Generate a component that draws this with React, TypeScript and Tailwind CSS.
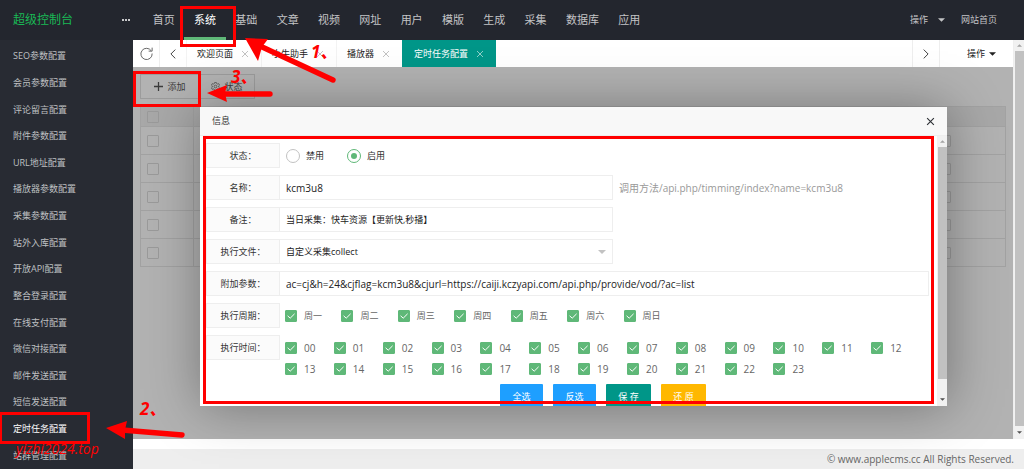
import React from "react";

const topNav = ["首页", "系统", "基础", "文章", "视频", "网址", "用户", "模版", "生成", "采集", "数据库", "应用"];

const sideNav = [
  "SEO参数配置", "会员参数配置", "评论留言配置", "附件参数配置", "URL地址配置", "播放器参数配置",
  "采集参数配置", "站外入库配置", "开放API配置", "整合登录配置", "在线支付配置", "微信对接配置",
  "邮件发送配置", "短信发送配置", "定时任务配置", "站群管理配置",
];

const tabs = ["欢迎页面", "小牛助手", "播放器", "定时任务配置"];
const days = ["周一", "周二", "周三", "周四", "周五", "周六", "周日"];
const hours = Array.from({ length: 24 }, (_, i) => String(i).padStart(2, "0"));

function Caret({ className }: { className: string }) {
  return (
    <svg viewBox="0 0 8 4" className={className} fill="currentColor" aria-hidden="true">
      <path d="M0 0h8L4 4z" />
    </svg>
  );
}

function Cross({ className, width = 1 }: { className: string; width?: number }) {
  return (
    <svg viewBox="0 0 8 8" className={className} fill="none" stroke="currentColor" strokeWidth={width} aria-hidden="true">
      <path d="M1 1l6 6M7 1L1 7" />
    </svg>
  );
}

function Chevron({ className, left = false }: { className: string; left?: boolean }) {
  return (
    <svg viewBox="0 0 6 10" className={className} fill="none" stroke="currentColor" strokeWidth="1" aria-hidden="true">
      <path d={left ? "M5.3.6L.9 5l4.4 4.4" : "M.7.6L5.1 5 .7 9.4"} />
    </svg>
  );
}

function ScrollBar({ thumb }: { thumb: string }) {
  return (
    <div className="flex w-[10px] shrink-0 flex-col items-center bg-[#f1f1f1]" aria-hidden="true">
      <div className="flex h-[11px] items-center text-[#a3a3a3]">
        <Caret className="h-[3px] w-[5px] rotate-180" />
      </div>
      <div className={thumb} />
      <div className="mt-auto flex h-[13px] items-center text-[#505050]">
        <Caret className="h-[3px] w-[5px]" />
      </div>
    </div>
  );
}

function Tick({ label }: { label: string }) {
  return (
    <label className="relative flex h-[21px] items-center gap-[7px] text-[#666]">
      <input type="checkbox" defaultChecked className="peer size-3 appearance-none rounded-[1px] border border-[#d2d2d2] checked:border-[#5fb878] checked:bg-[#5fb878]" />
      <svg viewBox="0 0 12 12" className="pointer-events-none absolute left-0 hidden size-3 peer-checked:block" fill="none" stroke="#fff" strokeWidth="1">
        <path d="M2.6 5.8l2.600 2.400 4.400-4.400" />
      </svg>
      <span>{label}</span>
    </label>
  );
}

function Row({ label, htmlFor, children }: { label: string; htmlFor?: string; children: React.ReactNode }) {
  const box = "flex h-[25px] w-[74px] shrink-0 items-center justify-center border border-[#eee] bg-[#fbfbfb] text-[#333]";
  return (
    <div className="flex items-start">
      {htmlFor ? <label htmlFor={htmlFor} className={box}>{label}</label> : <div className={box}>{label}</div>}
      {children}
    </div>
  );
}

const field = "h-[25px] min-w-0 appearance-none border border-l-0 border-[#eee] bg-white px-1.5 text-[#222] outline-none";

function TaskDialog() {
  return (
    <section role="dialog" aria-label="信息" className="absolute top-10 right-[66px] left-[67px] flex h-[299px] flex-col overflow-hidden bg-white shadow-[1px_1px_50px_rgba(0,0,0,0.35)]">
      <header className="flex h-[29px] shrink-0 items-center justify-between border-b border-[#eee] bg-[#f8f8f8] px-3 text-[#333]">
        <h2>信息</h2>
        <button aria-label="关闭" className="text-[#2d3035]"><Cross className="size-[9px]" width={1} /></button>
      </header>
      <div className="flex min-h-0 flex-1">
        <form className="flex min-w-0 flex-1 flex-col gap-[7px] overflow-hidden pt-[7px] pr-2 pl-1.5">
          <Row label="状态：">
            <div className="flex h-[25px] items-center gap-[23px] pl-1.5 text-[#333]">
              {["禁用", "启用"].map((t, i) => (
                <label key={t} className="flex items-center gap-1.5">
                  <input type="radio" name="status" defaultChecked={i === 1} className="grid size-[14px] appearance-none place-items-center rounded-full border border-[#c2c2c2] checked:border-[#5fb878] checked:before:size-1.5 checked:before:rounded-full checked:before:bg-[#5fb878] checked:before:content-['']" />
                  {t}
                </label>
              ))}
            </div>
          </Row>
          <Row label="名称：" htmlFor="name">
            <input id="name" defaultValue="kcm3u8" className={`${field} w-[333px] text-[10px]`} />
            <span className="flex h-[25px] items-center pl-1.5 text-[10px] text-[#999]">调用方法/api.php/timming/index?name=kcm3u8</span>
          </Row>
          <Row label="备注：" htmlFor="remark">
            <input id="remark" defaultValue="当日采集：快车资源【更新快,秒播】" className={`${field} w-[333px]`} />
          </Row>
          <Row label="执行文件：" htmlFor="file">
            <div className="relative flex w-[333px] items-center">
              <select id="file" className={`${field} w-full`}>
                <option>自定义采集collect</option>
              </select>
              <Caret className="pointer-events-none absolute right-[7px] h-1 w-2 text-[#c2c2c2]" />
            </div>
          </Row>
          <Row label="附加参数：" htmlFor="param">
            <input id="param" defaultValue="ac=cj&h=24&cjflag=kcm3u8&cjurl=https://caiji.kczyapi.com/api.php/provide/vod/?ac=list" className={`${field} flex-1 text-[10px]`} />
          </Row>
          <Row label="执行周期：">
            <div className="grid w-[400px] grid-cols-7 pt-0.5 pl-[5px]">
              {days.map((d) => <Tick key={d} label={d} />)}
            </div>
          </Row>
          <Row label="执行时间：">
            <div className="grid w-[640px] grid-cols-13 pt-0.5 pl-[5px] text-[10px]">
              {hours.map((h) => <Tick key={h} label={h} />)}
            </div>
          </Row>
          <div className="-mt-0.5 flex shrink-0 justify-center gap-2.5 pl-[71px] text-white">
            <button type="button" className="h-[25px] w-[43px] rounded-[1px] bg-[#1e9fff]">全选</button>
            <button type="button" className="h-[25px] w-[43px] rounded-[1px] bg-[#1e9fff]">反选</button>
            <button type="submit" className="h-[25px] w-[45px] rounded-[1px] bg-[#009688]">保 存</button>
            <button type="reset" className="h-[25px] w-[45px] rounded-[1px] bg-[#ffb800]">还 原</button>
          </div>
        </form>
        <ScrollBar thumb="h-[232px] w-[9px] bg-[#c1c1c1]" />
      </div>
    </section>
  );
}

function TaskList() {
  const box = "block size-3 appearance-none rounded-[1px] border border-[#9a9a9a]";
  return (
    <div className="px-[7px] pt-[7px]">
      <div className="flex text-[#3c3c3c]">
        <button className="flex h-[25px] w-[60px] items-center justify-center gap-1 border border-[#9c9c9c]">
          <svg viewBox="0 0 10 10" className="size-[9px]" stroke="currentColor" strokeWidth="1.4"><path d="M5 0v10M0 5h10" /></svg>
          添加
        </button>
        <button className="flex h-[25px] w-[55px] items-center justify-center gap-1 border border-l-0 border-[#9c9c9c]">
          <svg viewBox="0 0 10 10" className="size-[9px]" fill="none" stroke="currentColor" strokeWidth=".7">
            <circle cx="5" cy="5" r="1.5" />
            <path d="M4 .6h2l.3 1.200 1.100.5 1.100-.5 1 1.700-.9.8v1.400l.9.8-1 1.700-1.100-.5-1.100.5L6 9.400H4l-.3-1.200-1.100-.5-1.100.5-1-1.700.9-.8V4.300l-.9-.8 1-1.700 1.100.5 1.100-.5z" />
          </svg>
          状态
        </button>
      </div>
      <table className="mt-[7px] w-full table-fixed border-collapse border border-[#a2a2a2]">
        <tbody>
          {[0, 1, 2, 3, 4, 5].map((r) => (
            <tr key={r} className={r === 0 ? "h-5 bg-[#a8a8a8]" : "h-7"}>
              <td className="w-[53px] border border-[#a2a2a2] pl-1.5"><input type="checkbox" aria-label="选择" className={box} /></td>
              <td className="border border-[#a2a2a2]" />
              <td className="w-[74px] border-b border-[#a2a2a2]">{r > 0 && <input type="checkbox" aria-label="启用任务" className={`${box} ml-[7px]`} />}</td>
            </tr>
          ))}
        </tbody>
      </table>
    </div>
  );
}

const mark = "absolute border-3 border-[#f00]";
const note = "absolute font-bold italic text-[#f00] text-[17px] leading-5";

function Annotations() {
  return (
    <div className="pointer-events-none absolute inset-0 overflow-hidden">
      <div className={`${mark} top-1.5 left-[180px] h-[41px] w-14`} />
      <div className={`${mark} top-[71px] left-[133px] h-9 w-[68px]`} />
      <div className={`${mark} top-[412px] -left-px h-8 w-[91px]`} />
      <div className={`${mark} top-[136px] right-[90px] left-[203px] h-[268px]`} />
      <svg viewBox="0 0 1024 469" className="absolute top-0 left-0 h-[469px] w-[1024px]" fill="#f00" stroke="#f00">
        <path d="M260 46L333 80" strokeWidth="5.400" strokeLinecap="round" />
        <path d="M245 38l23 1-6 8-4 14z" stroke="none" />
        <path d="M224 94h46" strokeWidth="5.400" strokeLinecap="round" />
        <path d="M207 93l20-8-2 8 2 9z" stroke="none" />
        <path d="M122 430l60 5" strokeWidth="5.400" strokeLinecap="round" />
        <path d="M106 428l21-7-2 9 0 9z" stroke="none" />
      </svg>
      <span className={`${note} top-[42px] left-[311px]`}>1、</span>
      <span className={`${note} top-[399px] left-[140px]`}>2、</span>
      <span className={`${note} top-[67px] left-[231px]`}>3、</span>
      <span className="absolute top-[441px] left-4 text-[14px] leading-4 text-[#f00] italic">yizhi2024.top</span>
    </div>
  );
}

export default function App() {
  return (
    <div className="relative flex h-screen flex-col overflow-hidden bg-white font-['Open_Sans','Noto_Sans_CJK_SC',sans-serif] text-[9px] leading-3">
      <header className="flex h-10 shrink-0 items-center bg-[#23262e] text-[#c3c4c6]">
        <h1 className="w-[122px] pl-[13px] text-xs text-[#19b955]">超级控制台</h1>
        <button aria-label="更多" className="flex gap-px text-white">
          {[0, 1, 2].map((i) => <i key={i} className="size-0.5 rounded-full bg-current" />)}
        </button>
        <nav className="ml-[13px] flex h-full w-[507px] text-[11px]">
          {topNav.map((t) => (
            <a key={t} href="#" className={t === "系统" ? "relative flex grow items-center justify-center text-white after:absolute after:inset-x-0 after:bottom-0 after:h-[3px] after:bg-[#5fb878]" : "flex grow items-center justify-center"}>{t}</a>
          ))}
        </nav>
        <a href="#" className="ml-auto flex items-center gap-2.5">操作<Caret className="h-1 w-[7px]" /></a>
        <a href="#" className="mr-[27px] ml-4">网站首页</a>
      </header>
      <div className="flex min-h-0 flex-1">
        <nav className="flex w-[133px] shrink-0 flex-col bg-[#282b33] pt-[3px] text-[#bfc0c2]">
          {sideNav.map((t) => (
            <a key={t} href="#" className={t === "定时任务配置" ? "flex flex-1 items-center pl-[13px] text-white" : "flex flex-1 items-center pl-[13px]"}>{t}</a>
          ))}
        </nav>
        <div className="flex min-w-0 flex-1 flex-col">
          <div className="flex min-h-0 flex-1">
            <main className="flex min-w-0 flex-1 flex-col">
              <div className="flex h-[27px] shrink-0 text-[#222]">
                <button aria-label="刷新" className="grid w-[27px] place-items-center border-r border-[#eee]">
                  <svg viewBox="0 0 12 12" className="size-[13px]" fill="none" stroke="#666" strokeWidth="0.900">
                    <path d="M10.400 3.600A5.200 5.200 0 1 0 11.200 6M11.200.6v3.200H8" />
                  </svg>
                </button>
                <button aria-label="向左" className="grid w-[26px] place-items-center text-[#444]"><Chevron left className="h-[10px] w-1.5" /></button>
                {tabs.map((t) => {
                  const active = t === "定时任务配置";
                  return (
                    <div key={t} className={active ? "flex items-center gap-2 bg-[#009688] px-3 text-white" : "flex items-center gap-2 border-l border-[#f3f3f3] pr-3 pl-[10px]"}>
                      <a href="#">{t}</a>
                      <button aria-label="关闭标签" className={active ? "text-[#8fcfc8]" : "text-[#c2c2c2]"}><Cross className="size-2" /></button>
                    </div>
                  );
                })}
                <button aria-label="向右" className="ml-auto grid w-7 place-items-center border-x border-[#eee] text-[#444]"><Chevron className="h-[10px] w-1.5" /></button>
                <button className="flex w-[73px] items-center justify-center gap-1 pl-2.5">操作<Caret className="h-1 w-[7px]" /></button>
              </div>
              <div className="relative min-h-0 flex-1 bg-[#b2b2b2]">
                <TaskList />
                <TaskDialog />
              </div>
            </main>
            <div className="flex border-l border-[#eee]">
              <ScrollBar thumb="w-[9px] flex-1 bg-[#c1c1c1]" />
            </div>
          </div>
          <footer className="mt-[10px] flex h-5 shrink-0 items-center justify-end bg-[#eee] pr-[10px] text-[10px] text-[#666]">© www.applecms.cc All Rights Reserved.</footer>
        </div>
      </div>
      <Annotations />
    </div>
  );
}
